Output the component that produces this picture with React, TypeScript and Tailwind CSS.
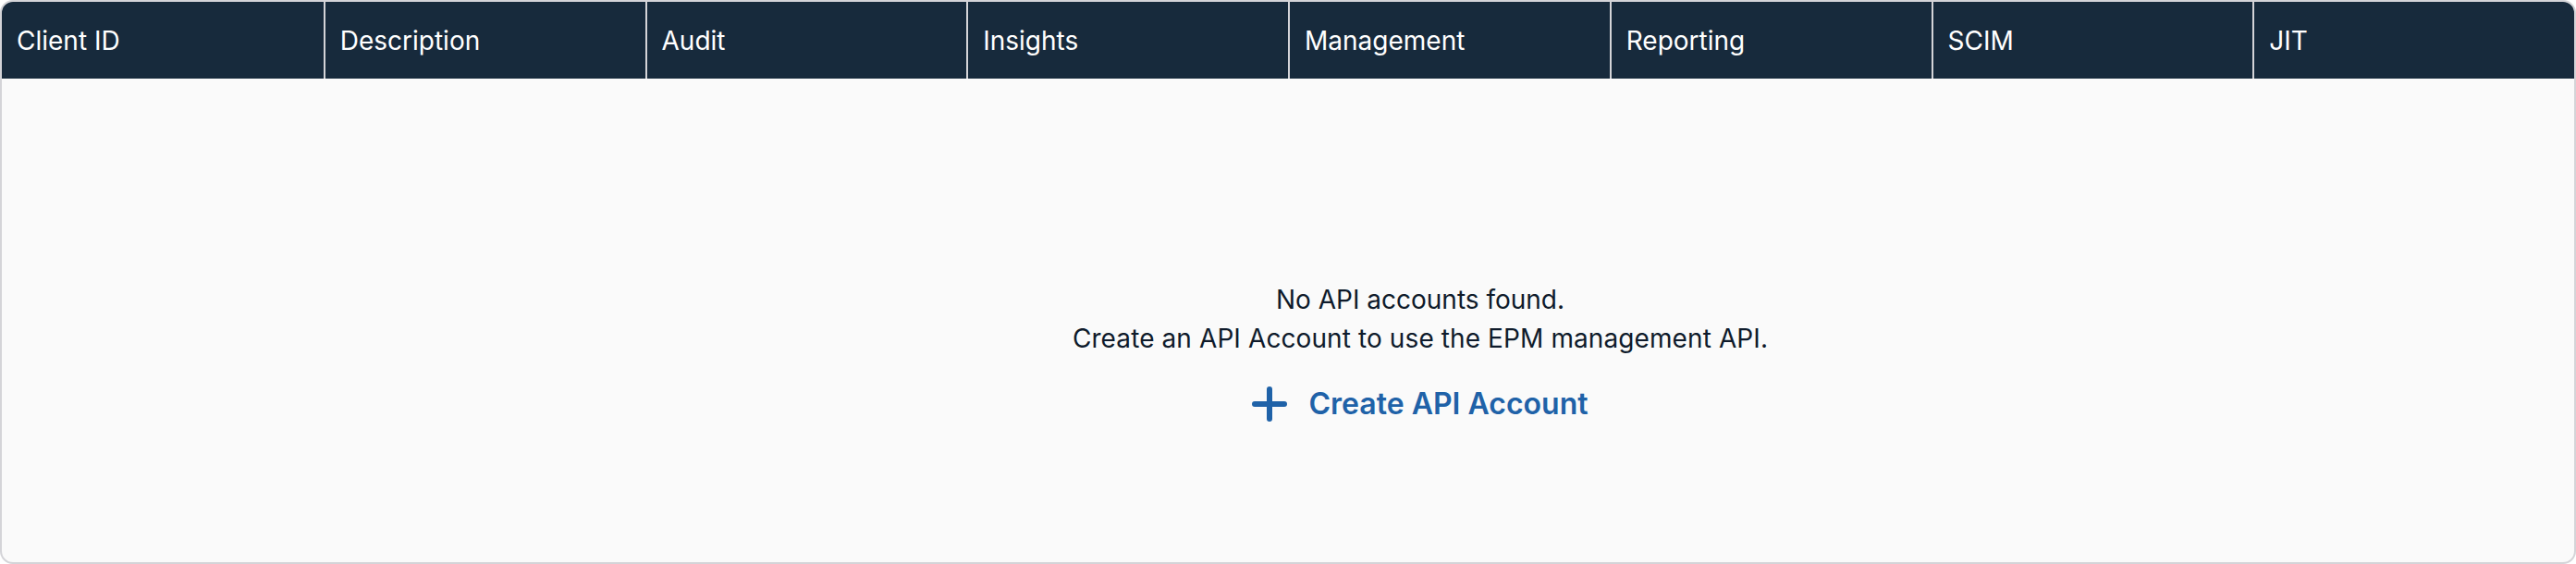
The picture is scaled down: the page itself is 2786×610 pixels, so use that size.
import React from "react";

const cols = ["Client ID", "Description", "Audit", "Insights", "Management", "Reporting", "SCIM", "JIT"];

export default function App() {
  return (
    <div className="w-[2786px] h-[610px] border-2 border-[#d4d4d8] rounded-[14px] overflow-hidden bg-[#fafafa] flex flex-col font-['Inter',sans-serif]">
      <div className="grid grid-cols-8 h-[83px] bg-[#172a3c] shrink-0">
        {cols.map((c, i) => (
          <div
            key={c}
            className={
              i === 0
                ? "flex items-center px-4 text-[28px] text-white"
                : "flex items-center px-4 text-[28px] text-white border-l-2 border-[#d4d4d8]"
            }
          >
            {c}
          </div>
        ))}
      </div>
      <div className="flex-1 flex flex-col items-center pl-[286px] pt-[218px]">
        <p className="text-[28px] leading-[42px] text-[#0f1b2b] text-center">No API accounts found.</p>
        <p className="text-[28px] leading-[42px] text-[#0f1b2b] text-center tracking-[0.1px]">
          Create an API Account to use the EPM management API.
        </p>
        <button className="mt-[30px] flex items-center gap-[23px] text-[#1f62a8] font-semibold text-[32px] leading-[40px]">
          <svg width="38" height="38" viewBox="0 0 38 38" fill="none">
            <path d="M19 3V35M3 19H35" stroke="#1f62a8" strokeWidth="6" strokeLinecap="round" />
          </svg>
          <span>Create API Account</span>
        </button>
      </div>
    </div>
  );
}
